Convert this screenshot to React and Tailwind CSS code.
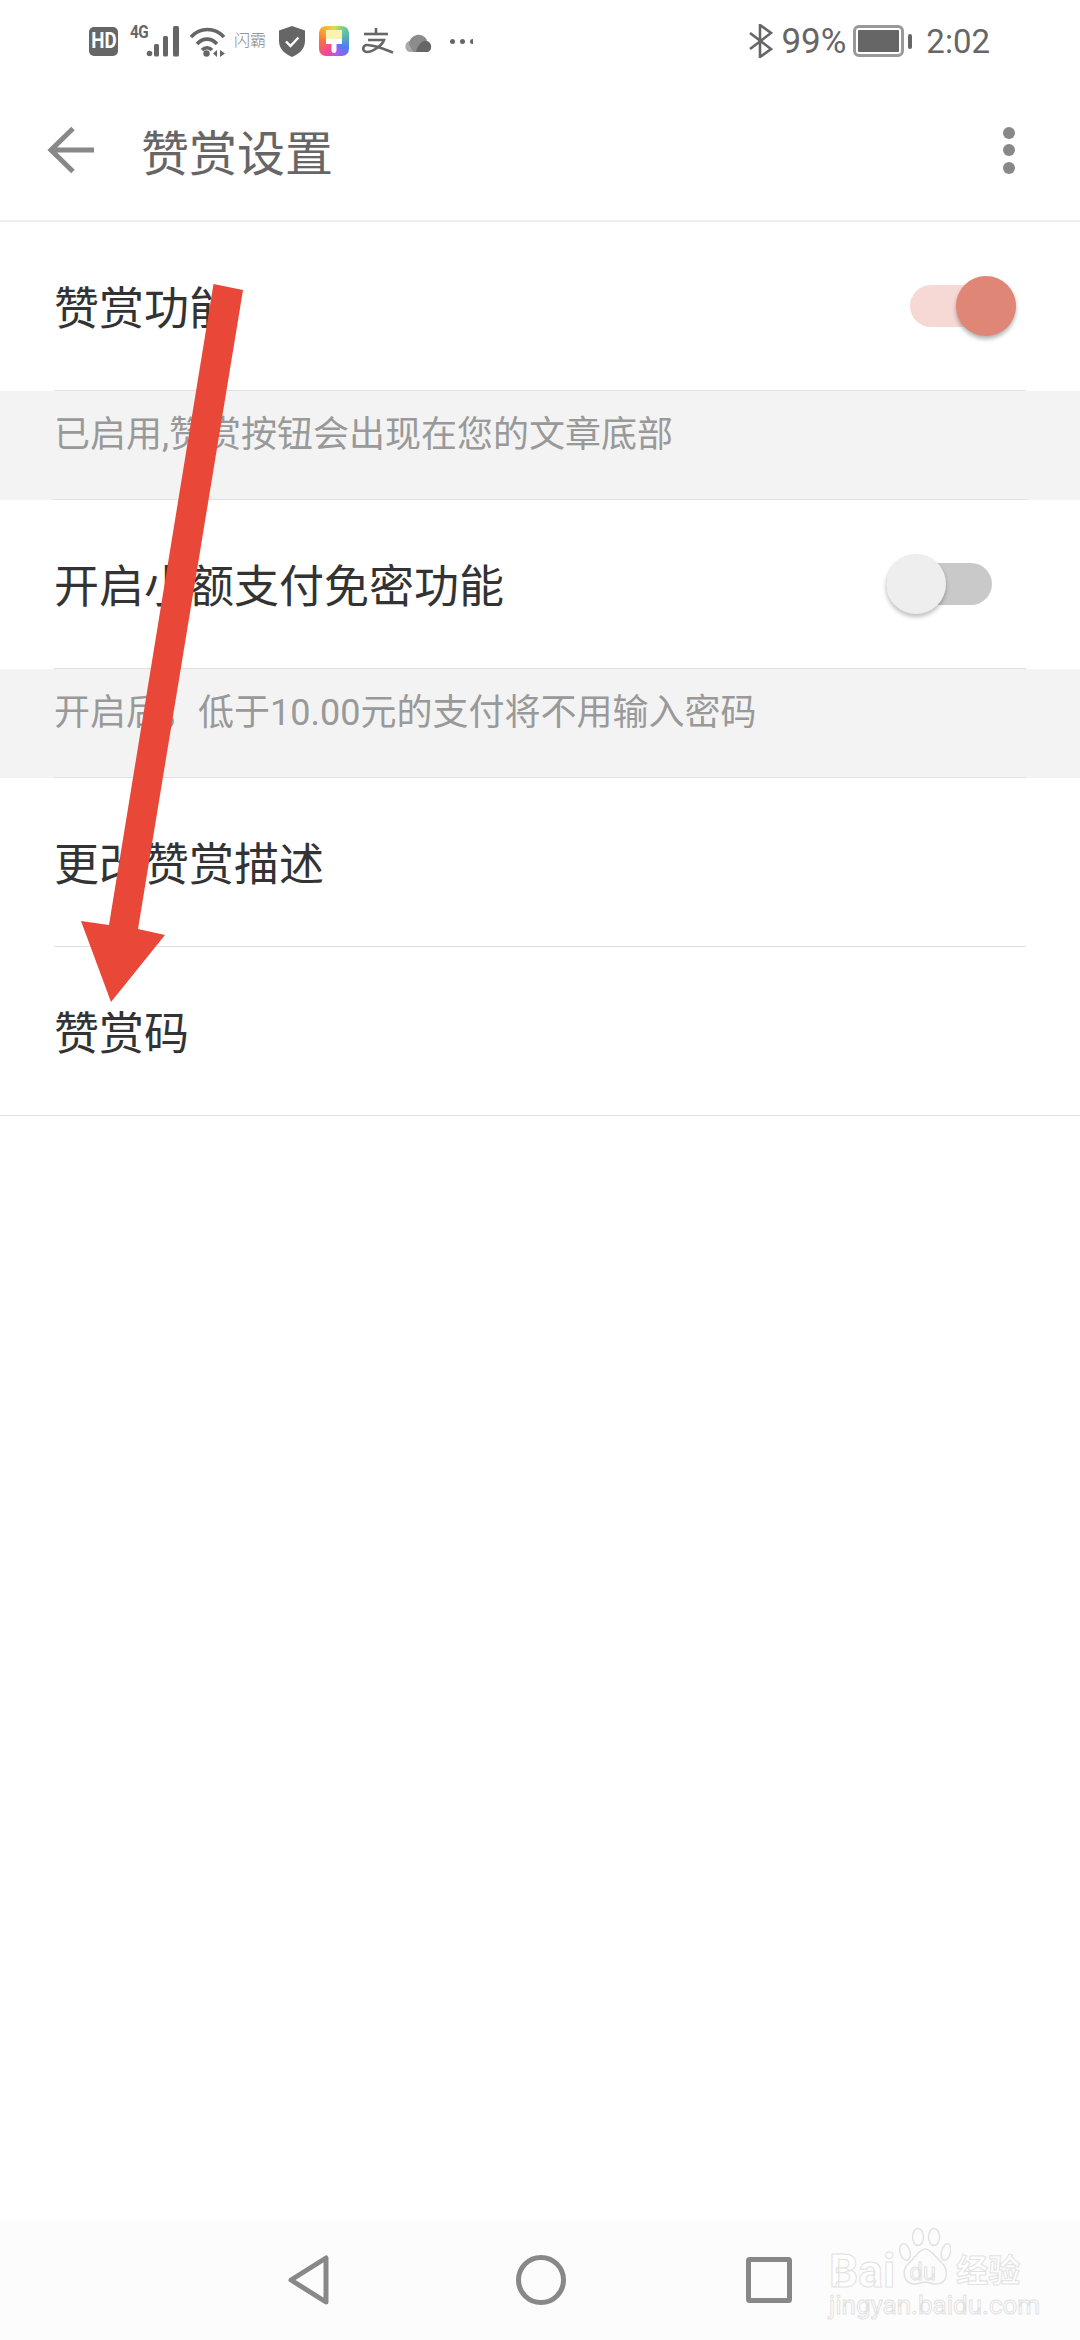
import { Fragment } from 'react';

const ROWS = [
  { label: '赞赏功能', note: '已启用,赞赏按钮会出现在您的文章底部', toggle: 'on' },
  { label: '开启小额支付免密功能', note: '开启后，低于10.00元的支付将不用输入密码', toggle: 'off' },
  { label: '更改赞赏描述' },
  { label: '赞赏码', last: true },
];

function HdBadge() {
  return (
    <span className="flex h-[29px] w-[29px] items-center justify-center rounded-[5px] bg-[#666] text-white">
      <span className="scale-x-[0.85] text-[22px] leading-none font-bold">HD</span>
    </span>
  );
}

function Signal() {
  return (
    <div className="relative h-[31px] w-[50px]">
      <span className="absolute top-[-3px] left-0 origin-left scale-x-[0.85] text-[18px] leading-[18px] font-bold tracking-[-0.5px] text-[#666]">4G</span>
      <svg className="absolute top-0 left-0" width="50" height="31" viewBox="0 0 50 31" fill="#666">
        <circle cx="19.5" cy="27.5" r="2.8" />
        <rect x="24" y="18" width="5" height="12.5" rx="1.5" />
        <rect x="33" y="10" width="5" height="20.5" rx="1.5" />
        <rect x="43" y="0" width="6" height="30.5" rx="1.5" />
      </svg>
    </div>
  );
}

function Wifi() {
  return (
    <svg width="38" height="31" viewBox="0 0 38 31" fill="none" stroke="#666" strokeWidth="3.6">
      <path d="M2 11C11 1 26 1 35 11" />
      <path d="M8 18C14 11.5 22 11.5 28 18" />
      <path d="M13 24C16 21 20 21 23 24" />
      <circle cx="17.5" cy="27.5" r="3.2" fill="#666" stroke="none" />
      <path d="M28 24V31L24 27.5ZM31 24V31L36 27.5Z" fill="#666" stroke="none" />
    </svg>
  );
}

function Shield() {
  return (
    <svg width="26" height="31" viewBox="0 0 26 31">
      <path d="M13 0L26 4.5V15C26 23 20 28 13 31C6 28 0 23 0 15V4.5Z" fill="#666" />
      <path d="M7 15.5L11.5 20L19.5 11.5" fill="none" stroke="#fff" strokeWidth="2.4" />
    </svg>
  );
}

function BrushApp() {
  return (
    <div className="flex h-[30px] w-[30px] items-start justify-center rounded-[7px] bg-[conic-gradient(#d6e24a_0deg,#5fc4a0_50deg,#4f7cf5_120deg,#a85cf0_165deg,#f0479a_210deg,#f8703f_270deg,#f9b233_325deg,#d6e24a_360deg)]">
      <svg width="16" height="26" viewBox="0 0 16 26" className="mt-[4px]">
        <rect x="0" y="0" width="16" height="9" fill="#fdf3b0" />
        <rect x="0" y="9" width="16" height="5" fill="#fff" />
        <path d="M5.5 14H10.5V20C10.5 22 9.5 23 8 23C6.5 23 5.5 22 5.5 20Z" fill="#fff" />
      </svg>
    </div>
  );
}

function AlipayMark() {
  return (
    <svg width="32" height="26" viewBox="0 0 32 26" fill="none" stroke="#666" strokeWidth="2.6">
      <path d="M14 0V7" />
      <path d="M2 6H26" />
      <path d="M6 12H22C20 18 10 24 5 24C0 24 0 17 5 17C13 17 22 21 31 24.5" />
    </svg>
  );
}

function Cloud() {
  return (
    <svg width="31" height="21" viewBox="0 0 31 21">
      <path d="M6 21A6 6 0 0 1 6 10L12 9V21Z" fill="#aaa" />
      <path d="M6 13A9.5 9.5 0 0 1 24 9L18 21H10Z" fill="#8c8c8c" />
      <path d="M13 21C15 14 19 9 24 10A6 6 0 0 1 25 21Z" fill="#666" />
    </svg>
  );
}

function Bluetooth() {
  return (
    <svg width="24" height="34" viewBox="0 0 24 34" fill="none" stroke="#666" strokeWidth="2.6">
      <path d="M1 9L22 25L11 33V1L22 9L1 25" />
    </svg>
  );
}

function Battery() {
  return (
    <div className="flex items-center gap-[4px]">
      <div className="h-[32px] w-[51px] rounded-[6px] border-[3px] border-[#999] p-[2px]">
        <div className="h-full w-full rounded-[1px] bg-[#666]" />
      </div>
      <div className="h-[15px] w-[4px] rounded-[2px] bg-[#666]" />
    </div>
  );
}

function StatusBar() {
  return (
    <div className="flex h-[80px] items-center pt-[2px] pr-[90px] pl-[89px] text-[#666]">
      <HdBadge />
      <div className="ml-[12px]"><Signal /></div>
      <div className="ml-[9px] flex"><Wifi /></div>
      <span className="ml-[7px] w-[36px] text-[16px] leading-none font-light whitespace-nowrap text-[#888]">闪霸</span>
      <div className="ml-[9px] flex"><Shield /></div>
      <div className="ml-[14px]"><BrushApp /></div>
      <div className="ml-[13px] flex"><AlipayMark /></div>
      <div className="ml-[9px] flex"><Cloud /></div>
      <div className="ml-[16px] flex gap-[5px]">
        <span className="h-[5px] w-[5px] rounded-full bg-[#666]" />
        <span className="h-[5px] w-[5px] rounded-full bg-[#666]" />
        <span className="h-[5px] w-[3px] rounded-l-full bg-[#666]" />
      </div>
      <div className="ml-auto flex items-center">
        <Bluetooth />
        <span className="ml-[8px] text-[35px] leading-none">99%</span>
        <div className="ml-[7px]"><Battery /></div>
        <span className="ml-[14px] text-[33px] leading-none">2:02</span>
      </div>
    </div>
  );
}

function Header() {
  return (
    <header className="border-b-2 border-[#eeeeee]">
      <StatusBar />
      <div className="flex h-[140px] items-center pr-[65px] pl-[47px]">
        <svg width="48" height="48" viewBox="0 0 48 48" fill="none" stroke="#888" strokeWidth="5">
          <path d="M47 24H4M26 2.5L4 24L26 45.5" />
        </svg>
        <h1 className="ml-[46px] pt-[10px] text-[48px] leading-none font-normal text-[#666]">赞赏设置</h1>
        <div className="ml-auto flex flex-col gap-[5.5px]">
          <span className="h-[12px] w-[12px] rounded-full bg-[#888]" />
          <span className="h-[12px] w-[12px] rounded-full bg-[#888]" />
          <span className="h-[12px] w-[12px] rounded-full bg-[#888]" />
        </div>
      </div>
    </header>
  );
}

function Toggle({ state }) {
  if (state === 'on') {
    return (
      <div className="relative mr-[10px] h-[42px] w-[106px] rounded-full bg-[#f6d9d5]">
        <span className="absolute top-[-9px] right-0 h-[60px] w-[60px] rounded-full bg-[#e08677] shadow-[0_3px_4px_rgba(0,0,0,0.3)]" />
      </div>
    );
  }
  return (
    <div className="relative mr-[34px] h-[42px] w-[106px] rounded-full bg-[#c9c9c9]">
      <span className="absolute top-[-9px] left-0 h-[60px] w-[60px] rounded-full bg-[#eeeeee] shadow-[0_3px_4px_rgba(0,0,0,0.25)]" />
    </div>
  );
}

function SettingRow({ row }) {
  return (
    <Fragment>
      <div className={row.last ? 'border-b border-[#e0e0e0]' : ''}>
        <div className={`ml-[54px] flex h-[168px] w-[972px] items-center text-[45px] leading-none text-[#333] ${row.last ? '' : 'box-content border-b border-[#e0e0e0]'}`}>
          <span className="pt-[6px]">{row.label}</span>
          {row.toggle && <div className="ml-auto"><Toggle state={row.toggle} /></div>}
        </div>
      </div>
      {row.note && (
        <div className="h-[109px] bg-[#f3f3f3]">
          <div className="ml-[54px] h-full w-[972px] border-b border-[#e0e0e0] pt-[22px] text-[36px] leading-[44px] text-[#999]">
            {row.note}
          </div>
        </div>
      )}
    </Fragment>
  );
}

function Watermark() {
  return (
    <div className="absolute top-0 left-[829px] flex w-[195px] flex-col text-white [-webkit-text-stroke:1px_#e2e2e2]">
      <div className="flex h-[70px] items-end">
        <span className="text-[46px] leading-[38px] font-bold">Bai</span>
        <div className="relative ml-[4px] h-[62px] w-[52px]">
          <svg className="absolute top-0 left-0" width="52" height="62" viewBox="0 0 52 62" fill="none" stroke="#e2e2e2" strokeWidth="1.5">
            <ellipse cx="6" cy="24" rx="5" ry="8.5" transform="rotate(-15 6 24)" />
            <ellipse cx="19" cy="9" rx="5.5" ry="8.5" />
            <ellipse cx="35" cy="9" rx="5.5" ry="8.5" />
            <ellipse cx="47" cy="24" rx="4.5" ry="8.5" transform="rotate(15 47 24)" />
            <path d="M26 21C20 21 17 29 10 35C2 42 4 56 16 56C21 56 23 54 26 54C29 54 32 56 37 56C49 56 50 42 43 35C36 29 32 21 26 21Z" />
          </svg>
          <span className="absolute top-[32px] left-[10px] text-[24px] leading-[24px]">du</span>
        </div>
        <span className="ml-[5px] text-[32px] leading-[38px] font-bold whitespace-nowrap">经验</span>
      </div>
      <span className="text-[26px] leading-[30px] whitespace-nowrap">jingyan.baidu.com</span>
    </div>
  );
}

function NavBar() {
  return (
    <nav className="relative flex h-[120px] items-center bg-[#fcfcfc] pl-[288px]">
      <svg width="41" height="50" viewBox="0 0 41 50" fill="none" stroke="#888" strokeWidth="5" strokeLinejoin="round">
        <path d="M38 3V47L3 25Z" />
      </svg>
      <svg className="ml-[187px]" width="50" height="50" viewBox="0 0 50 50" fill="none" stroke="#888" strokeWidth="5">
        <circle cx="25" cy="25" r="22.5" />
      </svg>
      <svg className="ml-[180px]" width="46" height="46" viewBox="0 0 46 46" fill="none" stroke="#888" strokeWidth="5" strokeLinejoin="round">
        <rect x="2.5" y="2.5" width="41" height="41" rx="1" />
      </svg>
      <Watermark />
    </nav>
  );
}

function Arrow() {
  return (
    <svg className="absolute top-0 left-0" width="1080" height="1100" viewBox="0 0 1080 1100">
      <path d="M213.5 284L243 290L138 929L165 935L111 1002L81 921L109 925Z" fill="#e94737" />
    </svg>
  );
}

export default function App() {
  return (
    <div className="relative flex h-[2340px] w-[1080px] flex-col overflow-hidden bg-white font-['Roboto','Noto_Sans_CJK_SC',sans-serif]">
      <Header />
      <main className="flex-1">
        {ROWS.map((row) => (
          <SettingRow key={row.label} row={row} />
        ))}
      </main>
      <NavBar />
      <Arrow />
    </div>
  );
}
